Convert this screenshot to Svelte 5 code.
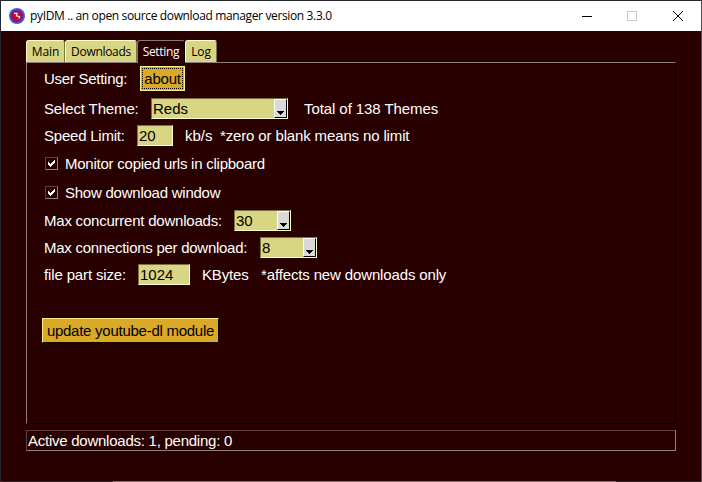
<script>
  const tabs = [
    { name: 'Main', width: 39, spacing: -0.1 },
    { name: 'Downloads', width: 72, spacing: -0.3 },
    { name: 'Setting', width: 48, spacing: -0.3 },
    { name: 'Log', width: 32, spacing: -0.2 }
  ];
  let active = $state('Setting');
  let monitor = $state(true);
  let showWindow = $state(true);
</script>

{#snippet arrow()}
  <span class="drop"><svg width="8" height="5" shape-rendering="crispEdges"><path d="M0 0H7V1H6V2H5V3H4V4H3V3H2V2H1V1H0Z" fill="#000" /></svg></span>
{/snippet}

{#snippet check(on)}
  <span class="box">
    {#if on}
      <svg width="9" height="9" viewBox="0 0 9 9" shape-rendering="crispEdges"><path d="M1 3h1v1h1v1h1v-1h1v-1h1v-1h1v-1h1v3h-1v1h-1v1h-1v1h-1v1h-1v-1h-1v-1h-1z" fill="#fff" /></svg>
    {/if}
  </span>
{/snippet}

<div class="desktop">
  <div class="window">
    <header>
      <svg class="logo" width="16" height="16" viewBox="0 0 16 16">
        <circle cx="8" cy="8" r="8" fill="#4a58df" />
        <circle cx="8" cy="8" r="6.2" fill="#5a2390" />
        <circle cx="8" cy="8" r="5.3" fill="#be0a3c" />
        <path d="M5 5.4L8 5.4L7.4 7.8L10.6 8.6L10 10.6" fill="none" stroke="#fff" stroke-width="1.2" />
      </svg>
      <span class="title">pyIDM .. an open source download manager version 3.3.0</span>
      <svg class="controls" width="120" height="29" shape-rendering="crispEdges">
        <path d="M1 14.5h10" stroke="#000" />
        <rect x="46.5" y="9.5" width="9" height="9" fill="none" stroke="#c8c8c8" />
        <path d="M92 9l10 10M102 9l-10 10" stroke="#000" shape-rendering="auto" />
      </svg>
    </header>
    <main>
      <nav>
        {#each tabs as tab}
          <button class="tab" class:active={active === tab.name} style="width: {tab.width}px; letter-spacing: {tab.spacing}px" onclick={() => (active = tab.name)}>{tab.name}</button>
        {/each}
      </nav>
      <section class="panel">
        <div class="row first">
          <span class="tight" style="width: 96px">User Setting:</span>
          <button class="gold about"><span>about</span></button>
        </div>
        <div class="row theme">
          <span class="loose" style="width: 107px">Select Theme:</span>
          <span class="field" style="width: 137px">Reds{@render arrow()}</span>
          <span class="loose" style="margin-left: 16px; letter-spacing: -0.08px">Total of 138 Themes</span>
        </div>
        <div class="row">
          <span style="width: 93px">Speed Limit:</span>
          <span class="field" style="width: 36px">20</span>
          <span class="plain" style="margin-left: 12px; width: 35px">kb/s</span>
          <span class="loose">*zero or blank means no limit</span>
        </div>
        <div class="row checks">
          <button class="checkline" onclick={() => (monitor = !monitor)}>{@render check(monitor)}<span>Monitor copied urls in clipboard</span></button>
        </div>
        <div class="row checks">
          <button class="checkline" onclick={() => (showWindow = !showWindow)}>{@render check(showWindow)}<span>Show download window</span></button>
        </div>
        <div class="row">
          <span style="width: 190px">Max concurrent downloads:</span>
          <span class="field" style="width: 57px">30{@render arrow()}</span>
        </div>
        <div class="row">
          <span class="tight" style="width: 216px">Max connections per download:</span>
          <span class="field" style="width: 57px">8{@render arrow()}</span>
        </div>
        <div class="row">
          <span class="loose" style="width: 94px">file part size:</span>
          <span class="field" style="width: 52px">1024</span>
          <span class="loose" style="margin-left: 12px; width: 59px">KBytes</span>
          <span class="loose">*affects new downloads only</span>
        </div>
        <button class="gold update">update youtube-dl module</button>
      </section>
      <footer>Active downloads: 1, pending: 0</footer>
    </main>
  </div>
</div>

<style>
  .desktop {
    box-sizing: border-box;
    width: 702px;
    height: 482px;
    padding: 1px;
    background:
      linear-gradient(#77757a, #77757a) 113px 481px / 503px 1px no-repeat,
      linear-gradient(90deg, #26292e 0 701px, #555159 701px);
    overflow: hidden;
  }
  .window {
    width: 700px;
    height: 480px;
    background: #280000;
    font-family: "Liberation Sans", Arial, sans-serif;
    font-size: 15px;
    letter-spacing: -0.22px;
    color: #fff;
    white-space: nowrap;
  }
  header {
    display: flex;
    align-items: center;
    height: 30px;
    background: #fff;
    color: #000;
  }
  .logo { margin: -1px 0 0 8px; }
  .title {
    flex: 1;
    margin-left: 5px;
    font: 12px/28px "Open Sans", sans-serif;
    letter-spacing: -0.36px;
  }
  button {
    margin: 0;
    padding: 0;
    border: 0;
    font: inherit;
    letter-spacing: inherit;
    color: inherit;
    background: none;
    white-space: nowrap;
  }
  main { padding: 9px 25px 0; }
  nav { display: flex; height: 22px; }
  .tab {
    box-sizing: border-box;
    height: 22px;
    border: 1px solid #ffffc8;
    border-right-color: #78753f;
    border-bottom: 0;
    border-radius: 3px 3px 0 0;
    background: #d8d584;
    color: #000;
    font: 12px/22px "Open Sans", sans-serif;
  }
  .tab.active {
    height: 23px;
    border-color: #8b7575 #000 #280000 #8b7575;
    background: #280000;
    color: #fff;
  }
  .panel {
    box-sizing: border-box;
    height: 362px;
    padding-top: 1px;
    padding-left: 17px;
    border: 1px solid;
    border-color: #937f7f #000 #000 #937f7f;
  }
  .row {
    display: flex;
    align-items: center;
    height: 27px;
  }
  .row span { flex: none; }
  .tight { letter-spacing: -0.27px; }
  .loose { letter-spacing: -0.14px; }
  .plain { letter-spacing: 0; }
  .first { height: 29px; }
  .theme { margin-top: 2px; }
  .gold {
    box-sizing: border-box;
    height: 25px;
    border: 1px solid;
    border-color: #fff080 #100800 #100800 #fff080;
    background: #daa928;
    color: #000;
  }
  .about { width: 45px; padding: 1px; border-color: #fff080; }
  .about span {
    display: block;
    box-sizing: border-box;
    height: 21px;
    line-height: 20px;
    border: 1px dotted #000;
  }
  .update {
    display: block;
    width: 177px;
    margin: 30px 0 0 -2px;
    letter-spacing: -0.26px;
  }
  .row .field {
    position: relative;
    box-sizing: border-box;
    height: 21px;
    padding-left: 1px;
    border: 1px solid;
    border-color: #77733f #ffffc8 #ffffc8 #77733f;
    background: #d8d584;
    color: #000;
    line-height: 20px;
    letter-spacing: 0;
  }
  .drop {
    position: absolute;
    top: 0;
    right: 0;
    box-sizing: border-box;
    width: 13px;
    height: 19px;
    border: 1px solid;
    border-color: #fff #000 #000 #fff;
    background: #d9d9d9;
  }
  .drop svg { position: absolute; left: 2px; top: 11px; }
  .checks { height: 29px; }
  .checkline {
    display: flex;
    align-items: center;
    height: 29px;
    line-height: 17px;
    letter-spacing: -0.24px;
  }
  .box {
    box-sizing: border-box;
    display: grid;
    place-items: center;
    width: 13px;
    height: 13px;
    margin: 0 7px 0 1px;
    border: 1px solid;
    border-color: #5c4040 #937f7f #937f7f #5c4040;
  }
  footer {
    box-sizing: border-box;
    width: 650px;
    height: 21px;
    margin-top: 6px;
    padding-left: 1px;
    border: 1px solid;
    border-color: #5c4040 #937f7f #937f7f #5c4040;
    line-height: 20px;
    letter-spacing: -0.25px;
  }
</style>
